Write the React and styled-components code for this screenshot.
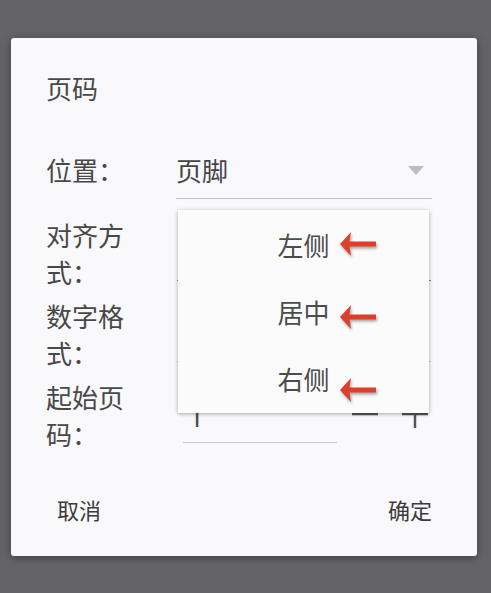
import React from 'react'
import styled, { createGlobalStyle } from 'styled-components'

const GlobalStyle = createGlobalStyle`
    html, body {
        margin: 0;
        padding: 0;
        background: #646365;
        font-family: "Noto Sans CJK SC", "Noto Sans", sans-serif;
    }
`

const Screen = styled.div`
    width: 491px;
    height: 593px;
    padding: 38px 14px 0 11px;
    box-sizing: border-box;
`

const Card = styled.div`
    position: relative;
    background: #f9f8fa;
    border-radius: 3px;
    box-shadow: 0 2px 8px rgba(0, 0, 0, 0.35);
    padding: 31px 45px 28.5px 35px;
    color: #484848;
`

const Title = styled.h2`
    margin: 0 0 45px;
    font-size: 26px;
    font-weight: 400;
    line-height: 37px;
`

const Row = styled.div`
    display: grid;
    grid-template-columns: 130px 1fr;
    align-items: start;
    margin-bottom: ${p => p.$gap}px;
`

const Label = styled.div`
    max-width: 100px;
    font-size: 26px;
    line-height: 37px;
`

const Select = styled.div`
    display: flex;
    align-items: center;
    justify-content: space-between;
    padding-bottom: 10px;
    border-bottom: 1px solid #c4c4c4;
    font-size: 26px;
    line-height: 37px;
    color: #454545;
`

const Caret = styled.span`
    width: 0;
    height: 0;
    margin: 2px 8px 0 0;
    border-left: 8px solid transparent;
    border-right: 8px solid transparent;
    border-top: 9px solid #bdbdbd;
`

const HiddenSelect = styled.div`
    height: 64px;
    margin: 0 1px;
    border-bottom: 1px solid ${p => (p.$focused ? '#4a8fd0' : '#cccccc')};
`

const Stepper = styled.div`
    display: flex;
    align-items: flex-start;
    padding-left: 7px;
`

const NumberInput = styled.div`
    width: 154px;
    height: 65px;
    padding: 22px 0 0 6px;
    box-sizing: border-box;
    border-bottom: 1px solid #c8c8c8;
    font-family: Roboto, "Noto Sans", sans-serif;
    font-size: 26px;
    line-height: 37px;
    color: #4a4a4a;
`

const StepButton = styled.svg`
    margin: 23px 0 0 ${p => p.$left}px;
    flex: none;
`

const Actions = styled.div`
    display: flex;
    justify-content: space-between;
    margin-top: 39.5px;
    padding-left: 11px;
`

const TextButton = styled.button`
    border: none;
    background: transparent;
    padding: 0;
    font-family: inherit;
    font-size: 22px;
    line-height: 36px;
    color: #3c3c3c;
`

const Menu = styled.ul`
    position: absolute;
    left: 167px;
    top: 172px;
    width: 251px;
    height: 203px;
    margin: 0;
    padding: 1px 0 0;
    box-sizing: border-box;
    list-style: none;
    background: #fbfbfc;
    box-shadow: 0 1px 4px rgba(0, 0, 0, 0.35);
`

const MenuItem = styled.li`
    height: 67px;
    display: flex;
    align-items: center;
    justify-content: center;
    font-size: 26px;
    color: #4c4c4c;
`

const Arrow = styled.svg`
    position: absolute;
    left: 161px;
    top: ${p => p.$top}px;
    filter: drop-shadow(1px 2px 1.5px rgba(0, 0, 0, 0.35));
`

function RedArrow({ top }) {
    return (
        <Arrow $top={top} width="40" height="26" viewBox="0 0 40 26">
            <path d="M1 13 L12 1 L10.5 10.5 L37 10.5 L37 15.5 L10.5 15.5 L12 25 Z" fill="#de3f2c" />
        </Arrow>
    )
}

const items = ['左侧', '居中', '右侧']
const arrowTops = [21, 94, 167]

export default function App() {
    return (
        <>
            <GlobalStyle />
            <Screen>
                <Card>
                    <Title>页码</Title>

                    <Row $gap={16.5}>
                        <Label>位置：</Label>
                        <Select>
                            <span>页脚</span>
                            <Caret />
                        </Select>
                    </Row>

                    <Row $gap={7}>
                        <Label>对齐方式：</Label>
                        <HiddenSelect $focused />
                    </Row>

                    <Row $gap={7}>
                        <Label>数字格式：</Label>
                        <HiddenSelect />
                    </Row>

                    <Row $gap={0}>
                        <Label>起始页码：</Label>
                        <Stepper>
                            <NumberInput>1</NumberInput>
                            <StepButton $left={15} width="26" height="26" viewBox="0 0 26 26">
                                <line x1="0" y1="13" x2="26" y2="13" stroke="#555" strokeWidth="2.5" />
                            </StepButton>
                            <StepButton $left={24} width="26" height="28" viewBox="0 0 26 28">
                                <line x1="0" y1="13" x2="26" y2="13" stroke="#555" strokeWidth="2.5" />
                                <line x1="13" y1="0" x2="13" y2="27" stroke="#555" strokeWidth="2.5" />
                            </StepButton>
                        </Stepper>
                    </Row>

                    <Actions>
                        <TextButton>取消</TextButton>
                        <TextButton>确定</TextButton>
                    </Actions>

                    <Menu>
                        {items.map(item => (
                            <MenuItem key={item}>{item}</MenuItem>
                        ))}
                        {arrowTops.map(t => (
                            <RedArrow key={t} top={t} />
                        ))}
                    </Menu>
                </Card>
            </Screen>
        </>
    )
}
